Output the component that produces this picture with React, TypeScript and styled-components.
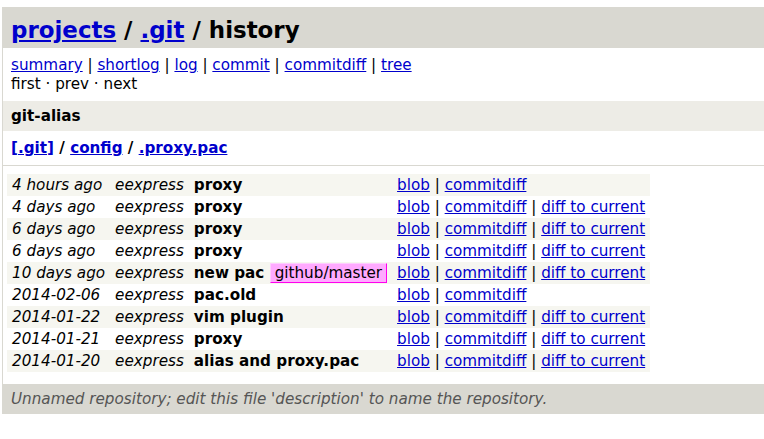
import React from 'react';
import styled, { createGlobalStyle } from 'styled-components';

const GlobalStyle = createGlobalStyle`
  html, body {
    background: #ffffff;
  }
  body {
    margin: 7px 0 0 2px;
    font-family: "DejaVu Sans", "Liberation Sans", sans-serif;
    font-size: 15.2px;
    color: #000000;
    border: 1px solid #d9d8d1;
    border-right: none;
  }
`;

const Link = styled.a`
  color: #0000cc;
  text-decoration: underline;
  cursor: pointer;
`;

const PageHeader = styled.div`
  height: 22px;
  padding: 10px 8px 8px;
  font-size: 151%;
  font-weight: bold;
  line-height: 24px;
  background: #d9d8d1;
`;

const PageNav = styled.div`
  padding: 8px;
  line-height: 18.5px;
`;

const Title = styled.div`
  padding: 6px 8px;
  line-height: 18px;
  font-weight: bold;
  background: #edece6;
`;

const PagePath = styled.div`
  padding: 8px;
  line-height: 18px;
  font-weight: bold;
  border-bottom: 1px solid #d9d8d1;
`;

const Table = styled.table`
  padding: 8px 4px 12px;
  border-spacing: 0;
`;

const Row = styled.tr<{ $dark: boolean }>`
  background: ${(p) => (p.$dark ? '#f6f6f0' : '#ffffff')};
`;

const Cell = styled.td<{ $italic?: boolean; $bold?: boolean }>`
  padding: 2px 5px;
  line-height: 18px;
  vertical-align: top;
  white-space: nowrap;
  font-style: ${(p) => (p.$italic ? 'italic' : 'normal')};
  font-weight: ${(p) => (p.$bold ? 'bold' : 'normal')};
`;

const RefHead = styled.span`
  padding: 0 4px;
  font-weight: normal;
  background: #ffaaff;
  border: 1px solid;
  border-color: #ffccff #ff00ee #ff00ee #ffccff;
`;

const PageFooter = styled.div`
  height: 29px;
  padding: 0 8px;
  background: #d9d8d1;
`;

const FooterText = styled.div`
  padding-top: 1px;
  line-height: 29px;
  color: #555555;
  font-style: italic;
`;

type Entry = {
  age: string;
  author: string;
  subject: string;
  ref?: string;
  current: boolean;
};

const entries: Entry[] = [
  { age: '4 hours ago', author: 'eexpress', subject: 'proxy', current: false },
  { age: '4 days ago', author: 'eexpress', subject: 'proxy', current: true },
  { age: '6 days ago', author: 'eexpress', subject: 'proxy', current: true },
  { age: '6 days ago', author: 'eexpress', subject: 'proxy', current: true },
  { age: '10 days ago', author: 'eexpress', subject: 'new pac', ref: 'github/master', current: true },
  { age: '2014-02-06', author: 'eexpress', subject: 'pac.old', current: false },
  { age: '2014-01-22', author: 'eexpress', subject: 'vim plugin', current: true },
  { age: '2014-01-21', author: 'eexpress', subject: 'proxy', current: true },
  { age: '2014-01-20', author: 'eexpress', subject: 'alias and proxy.pac', current: true },
];

export default function App() {
  return (
    <>
      <GlobalStyle />
      <PageHeader>
        <Link>projects</Link> / <Link>.git</Link> / history
      </PageHeader>
      <PageNav>
        <Link>summary</Link> | <Link>shortlog</Link> | <Link>log</Link> | <Link>commit</Link> |{' '}
        <Link>commitdiff</Link> | <Link>tree</Link>
        <br />
        first &middot; prev &middot; next
      </PageNav>
      <Title>git-alias</Title>
      <PagePath>
        <Link>[.git]</Link> / <Link>config</Link> / <Link>.proxy.pac</Link>
      </PagePath>
      <Table>
        <tbody>
          {entries.map((e, i) => (
            <Row key={i} $dark={i % 2 === 0}>
              <Cell $italic>{e.age}</Cell>
              <Cell $italic>{e.author}</Cell>
              <Cell $bold>
                {e.subject}
                {e.ref && (
                  <>
                    {' '}
                    <RefHead>{e.ref}</RefHead>
                  </>
                )}
              </Cell>
              <Cell>
                <Link>blob</Link> | <Link>commitdiff</Link>
                {e.current && (
                  <>
                    {' | '}
                    <Link>diff to current</Link>
                  </>
                )}
              </Cell>
            </Row>
          ))}
        </tbody>
      </Table>
      <PageFooter>
        <FooterText>Unnamed repository; edit this file 'description' to name the repository.</FooterText>
      </PageFooter>
    </>
  );
}
